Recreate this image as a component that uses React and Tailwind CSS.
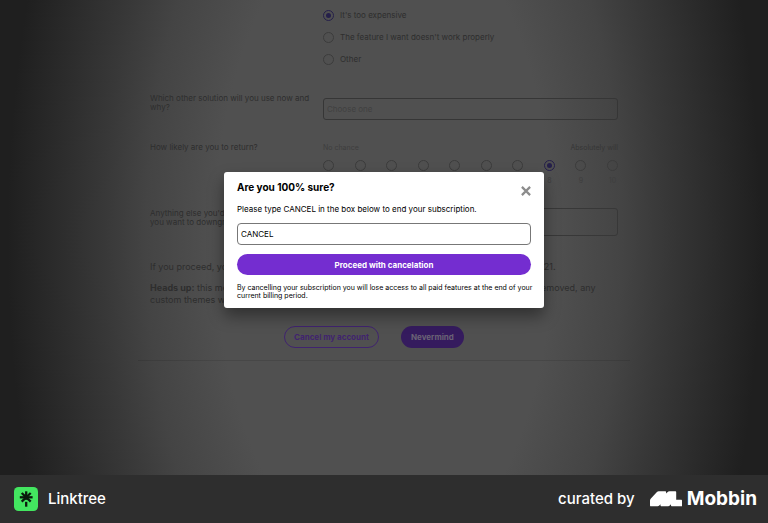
import { useState } from 'react';

const reasons = ["It's too expensive", "The feature I want doesn't work properly", 'Other'];
const scores = [1, 2, 3, 4, 5, 6, 7, 8, 9, 10];

function Radio({ id, name, checked, onChange, label }) {
  return (
    <input
      id={id}
      type="radio"
      name={name}
      checked={checked}
      onChange={onChange}
      aria-label={label}
      className="block w-[11px] h-[11px] shrink-0 appearance-none rounded-full border border-[#3c3c3c] p-[2px] bg-clip-content checked:border-[#251f4a] checked:bg-[#251f4a]"
    />
  );
}

function LinktreeLogo() {
  return (
    <svg viewBox="0 0 24 24" className="w-6 h-6" aria-hidden="true">
      <rect width="24" height="24" rx="4.5" fill="#43e660" />
      <g stroke="#0b1a0d" strokeWidth="2.3" fill="none">
        <path d="M12.2 4.3v8.5" />
        <path d="M5.8 10.3h12.8" />
        <path d="M7.7 6l9 8.6" />
        <path d="M16.700 6l-9 8.600" />
        <path d="M12.200 14.800v4.900" />
      </g>
    </svg>
  );
}

function MobbinLogo() {
  return (
    <svg viewBox="0 0 32 16" className="w-8 h-4" aria-hidden="true" fill="#fff">
      <path d="M0 14.400V9.600c0-.8.3-1.500.9-2.100L6.700 1.200C7.300.600 8 .300 8.800.300h6.300c.6 0 1 .4 1 1v1.100l1.300-1.200c.6-.6 1.300-.9 2.100-.9h5.700c.6 0 1 .4 1 1v7.400h4.800c.6 0 1 .4 1 1V15.300H22c-.6 0-1-.4-1-1v-1l-1.200 1.200c-.5.5-1 .8-1.700.8h-6.600c-.6 0-1-.4-1-1v-1l-1.200 1.200c-.5.5-1 .8-1.700.8H.9c-.5 0-.9-.4-.9-.9z" />
    </svg>
  );
}

function CancelDialog() {
  const [value, setValue] = useState('CANCEL');

  return (
    <div
      role="dialog"
      aria-labelledby="dialog-title"
      className="absolute top-[172px] left-1/2 -translate-x-1/2 w-80 max-w-full rounded-[3px] bg-white px-[13px] pt-[9px] pb-2 text-black shadow-[0_8px_16px_rgba(0,0,0,0.4)]"
    >
      <div className="flex justify-between">
        <h2 id="dialog-title" className="text-[10px] leading-[13px] font-bold">Are you 100% sure?</h2>
        <button type="button" aria-label="Close" className="mt-[5px] h-[10px]">
          <svg viewBox="0 0 10 10" className="w-[10px] h-[10px]" stroke="#8c8c8c" strokeWidth="2.2" fill="none">
            <path d="M.9.9l8.200 8.200M9.100.9L.9 9.100" />
          </svg>
        </button>
      </div>
      <label htmlFor="confirm" className="block mt-[7px] text-[8px] leading-[12px]">
        Please type CANCEL in the box below to end your subscription.
      </label>
      <input
        id="confirm"
        type="text"
        value={value}
        onChange={(e) => setValue(e.target.value)}
        className="block mt-2 w-full h-[22px] rounded-[4px] border border-[#777] px-[3px] text-[8px]"
      />
      <button type="button" className="block mt-[9px] w-full h-[21px] rounded-full bg-[#742dd0] text-[8px] font-bold text-white">
        Proceed with cancelation
      </button>
      <p className="mt-[9px] -mr-2 text-[7px] leading-[8px]">
        By cancelling your subscription you will lose access to all paid features at the end of your current billing period.
      </p>
    </div>
  );
}

export default function App() {
  const [reason, setReason] = useState(0);
  const [score, setScore] = useState(8);

  return (
    <div className="flex min-h-screen flex-col bg-[#2e2e2e] font-['Inter',sans-serif]">
      <main className="relative flex-1 overflow-hidden bg-[radial-gradient(ellipse_50%_160%_at_50%_50%,#505050_0%,#505050_44%,#444444_62%,#383838_73%,#2b2b2b_86%,#1f1f1f_98%)] text-[8px] text-[#2e2e2e]">
        <form className="mx-auto w-[492px] max-w-full border-b border-black/10 px-3 pt-1 pb-3">
          <div className="grid grid-cols-[162px_1fr] gap-x-[11px]">
            <div className="col-start-2">
              {reasons.map((text, i) => (
                <div key={text} className="flex h-[22px] items-center gap-[6px]">
                  <Radio id={`reason-${i}`} name="reason" checked={reason === i} onChange={() => setReason(i)} />
                  <label htmlFor={`reason-${i}`}>{text}</label>
                </div>
              ))}
            </div>

            <label htmlFor="solution" className="mt-6 leading-[9px]">
              Which other solution will you use now and why?
            </label>
            <select
              id="solution"
              className="mt-7 h-[22px] w-full appearance-none rounded-[3px] border border-[#363636] px-[3px] text-[#404040]"
            >
              <option>Choose one</option>
            </select>

            <div className="mt-[22px] leading-[10px]">How likely are you to return?</div>
            <div className="mt-6">
              <div className="flex justify-between text-[7px] leading-[8px] text-[#3e3e3e]">
                <span>No chance</span>
                <span className="text-[#363636]">Absolutely will</span>
              </div>
              <div className="mt-2 flex justify-between">
                {scores.map((n) => (
                  <div key={n} className="flex flex-col items-center">
                    <Radio name="score" label={`${n} out of 10`} checked={score === n} onChange={() => setScore(n)} />
                    <span className="mt-[6px] w-[11px] text-center text-[7px] leading-[8px] text-[#3e3e3e]">{n}</span>
                  </div>
                ))}
              </div>
            </div>

            <label htmlFor="notes" className="mt-6 leading-[9px]">
              Anything else you'd like to add about why you want to downgrade?
            </label>
            <textarea id="notes" className="mt-[23px] block h-7 w-full resize-none rounded-[3px] border border-[#383838]" />
          </div>

          <p className="mt-[25px] text-[9px] leading-[12px]">
            If you proceed, your subscription will end and your account will be downgraded on Dec 1, 2021.
          </p>
          <p className="mt-[9px] text-[9px] leading-[12px]">
            <b>Heads up:</b> this means that these premium features will be lost, your scheduled links will be removed, any custom themes will be reset.
          </p>
          <div className="mt-5 flex justify-center gap-[22px] pr-5 font-bold">
            <button type="button" className="h-[22px] rounded-full border border-[#40236f] px-[9px] text-[#40236f]">
              Cancel my account
            </button>
            <button type="button" className="h-[22px] rounded-full bg-[#351b5e] px-[10px] text-[#6a6275]">
              Nevermind
            </button>
          </div>
        </form>
        <CancelDialog />
      </main>

      <footer className="flex h-12 items-center justify-between bg-[#2e2e2e] pr-[11px] pl-[14px] text-white">
        <div className="flex items-center gap-[10px] text-[15px] font-medium">
          <LinktreeLogo />
          <span>Linktree</span>
        </div>
        <div className="flex items-center gap-[15px] text-[15px] font-medium">
          <span>curated by</span>
          <div className="flex items-center gap-[5px] text-[19px] font-bold">
            <MobbinLogo />
            <span>Mobbin</span>
          </div>
        </div>
      </footer>
    </div>
  );
}
